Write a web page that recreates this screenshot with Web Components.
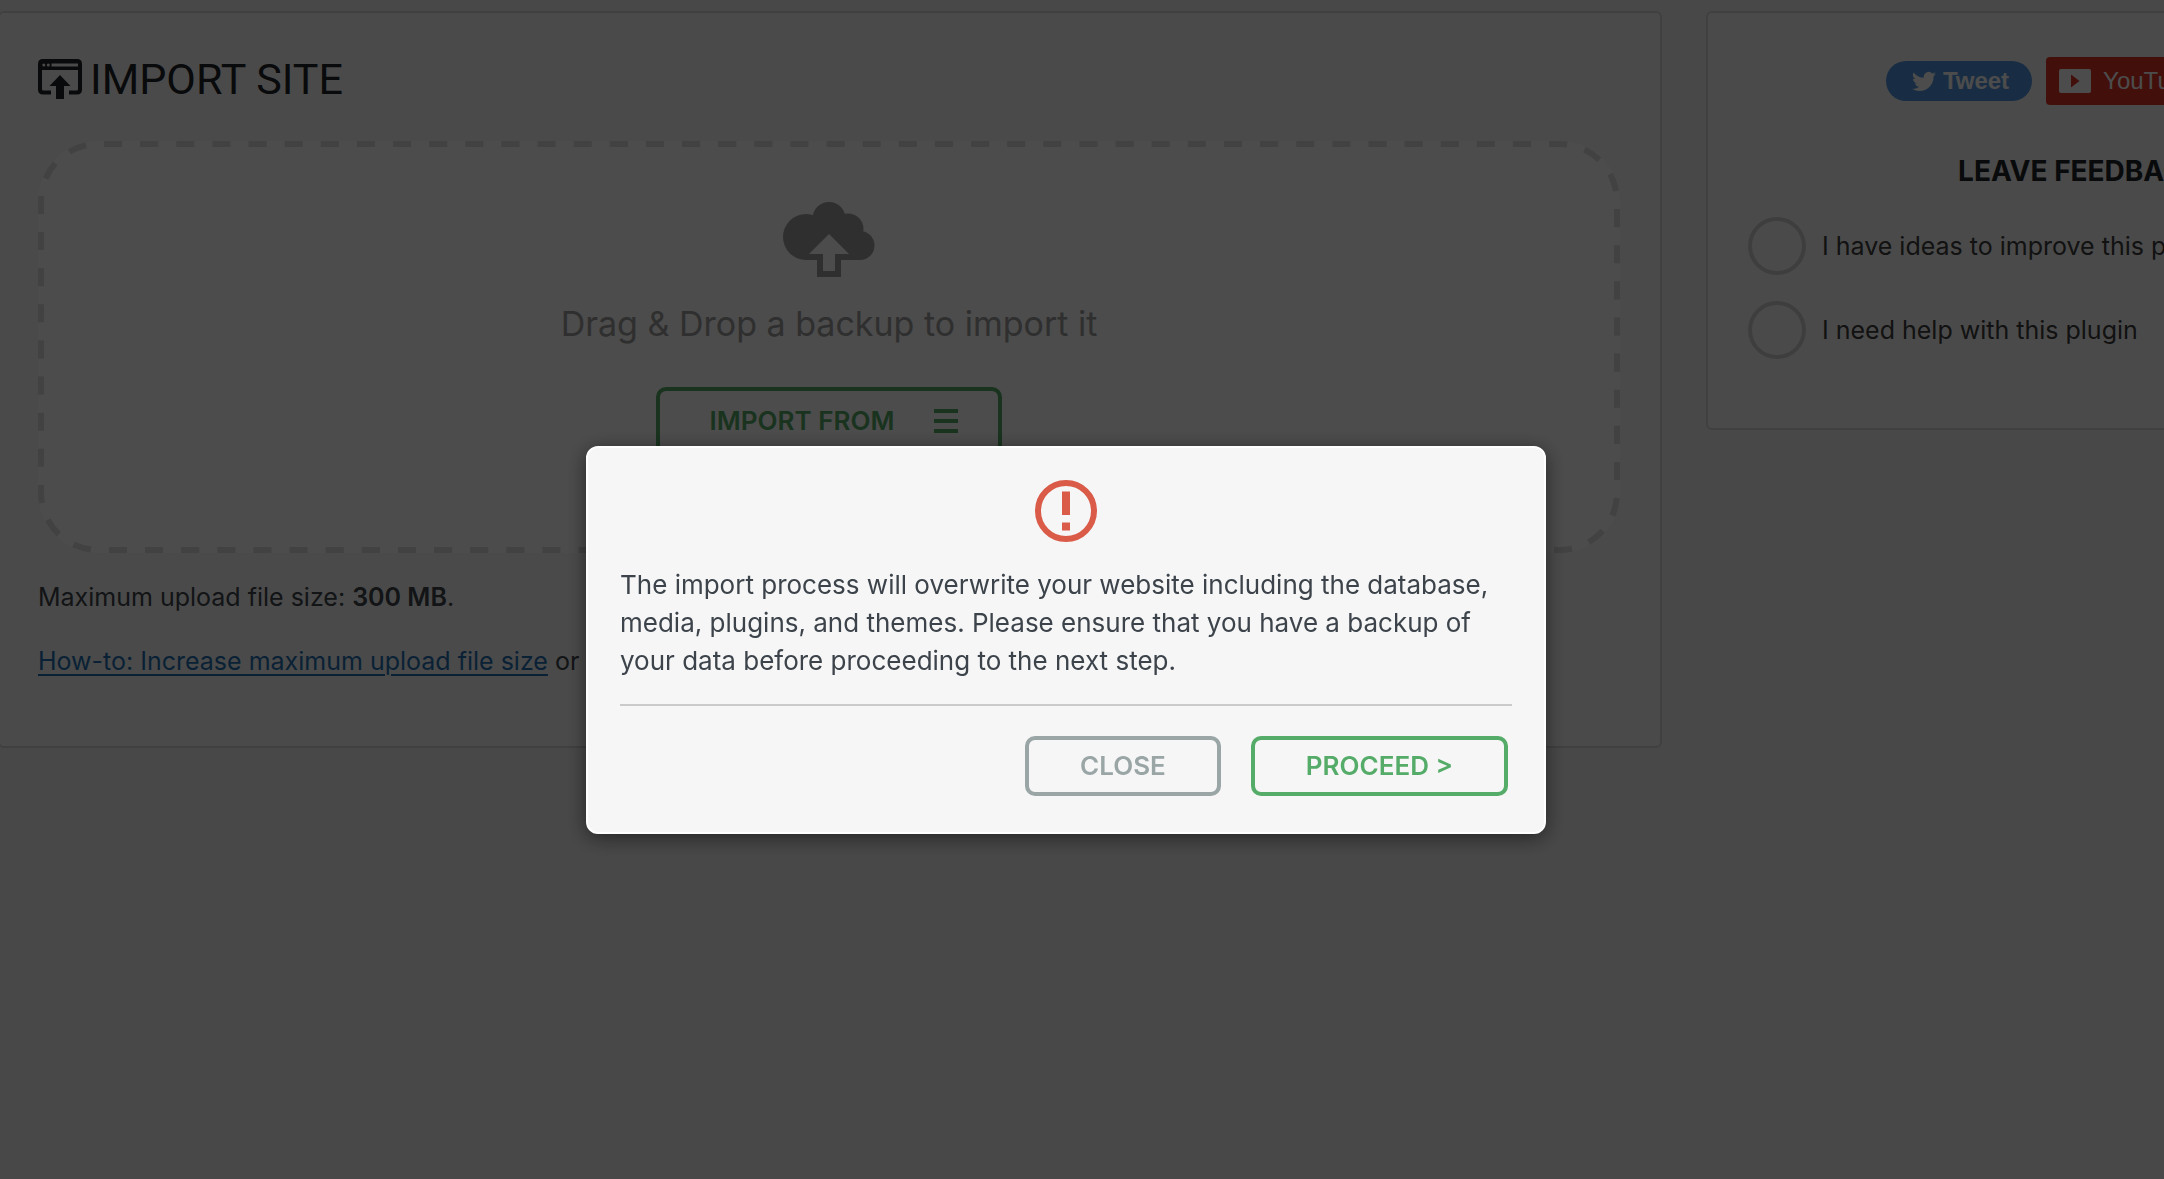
<!DOCTYPE html>
<html lang="en">
<head>
<meta charset="utf-8">
<title>Import Site</title>
<style>
  html { overflow: hidden; }
  body {
    margin: 0;
    min-height: 100vh;
    background: #f1f1f1;
    color: #3c434a;
    font: 400 25px/38px Inter, "Liberation Sans", sans-serif;
  }
</style>
</head>
<body>
<import-page></import-page>

<script>
class BaseElement extends HTMLElement {
  connectedCallback() {
    if (this.shadowRoot) return;
    this.attachShadow({ mode: 'open' }).innerHTML =
      '<style>*{box-sizing:border-box}' + this.constructor.css + '</style>' + this.constructor.html;
  }
}

class PanelCard extends BaseElement {
  static css = `
    :host { display: block; box-sizing: border-box; background: #f9f9f9; border: 2px solid #d6d6d6; border-radius: 6px; }
  `;
  static html = `<slot></slot>`;
}
customElements.define('panel-card', PanelCard);

class OutlineButton extends BaseElement {
  static css = `
    :host { display: inline-block; --tone: #55ab68; }
    :host([tone="muted"]) { --tone: #9aa5a6; }
    button {
      display: flex; align-items: center; gap: 40px;
      height: 60px; padding: 0 51px;
      border: 4px solid var(--tone); border-radius: 10px;
      background: transparent; color: var(--tone);
      font: 600 26px/38px Inter, "Liberation Sans", sans-serif;
    }
    :host([size="wide"]) button { height: 68px; padding: 0 40px 0 50px; }
  `;
  static html = `<button type="button"><slot></slot><slot name="icon"></slot></button>`;
}
customElements.define('outline-button', OutlineButton);

class SiteHeading extends BaseElement {
  static css = `
    :host { display: block; color: #1d2327; }
    h1 { display: flex; align-items: center; gap: 8px; margin: 0; font: 400 43px/60px Roboto, "Liberation Sans", sans-serif; }
    svg { display: block; flex: none; }
  `;
  static html = `
    <h1>
      <svg width="44" height="40" viewBox="0 0 44 40" aria-hidden="true">
        <path fill="currentColor" fill-rule="evenodd" d="M5 0H39Q44 0 44 5V30.500Q44 35.500 39 35.500H31V31.500H38.500Q40 31.500 40 30V11H4V30Q4 31.500 5.500 31.500H13V35.500H5Q0 35.500 0 30.500V5Q0 0 5 0ZM13.500 4.500V7.500H40V4.500Z"/>
        <circle cx="5.800" cy="6" r="1.500" fill="#f9f9f9"/>
        <circle cx="10.300" cy="6" r="1.500" fill="#f9f9f9"/>
        <path fill="currentColor" d="M22 16L32.500 27H26V40H18V27H11.500Z"/>
      </svg>
      <span>IMPORT SITE</span>
    </h1>
  `;
}
customElements.define('site-heading', SiteHeading);

class DropZone extends BaseElement {
  static css = `
    :host {
      position: relative; display: flex; flex-direction: column; align-items: center;
      box-sizing: border-box; height: 412px; padding-top: 61px;
      background: #fdfdfd; border-radius: 60px;
    }
    p { margin: 0; padding: 24px 0 40px; color: #9d9d9d; font-size: 34px; line-height: 46px; }
    svg { display: block; }
    .outline { position: absolute; inset: 0; width: 100%; height: 100%; }
    .outline rect {
      x: 3px; y: 3px; width: calc(100% - 6px); height: calc(100% - 6px); rx: 57px;
      fill: none; stroke: #dcdcdc; stroke-width: 6px; stroke-dasharray: 3 3; stroke-dashoffset: -1;
    }
    .cloud, p, outline-button { z-index: 1; }
  `;
  static html = `
    <svg class="outline" aria-hidden="true"><rect pathLength="642"/></svg>
    <svg class="cloud" width="92" height="75" viewBox="0 0 92 75" aria-hidden="true">
      <g fill="#9d9d9d">
        <circle cx="23" cy="35" r="23"/>
        <circle cx="46" cy="16.500" r="16.500"/>
        <circle cx="65" cy="27" r="15.500"/>
        <circle cx="77" cy="43.500" r="14.500"/>
        <path d="M23 20H66L80 40L77 58H23Z"/>
        <path d="M34 50H58V75H34Z"/>
      </g>
      <path fill="#fdfdfd" d="M46 32L66 52H52V69H40V52H26Z"/>
    </svg>
    <p>Drag &amp; Drop a backup to import it</p>
    <outline-button size="wide">IMPORT FROM
      <svg slot="icon" width="24" height="24" viewBox="0 0 24 24" aria-hidden="true">
        <path fill="currentColor" d="M0 0H24V4H0ZM0 10H24V14H0ZM0 20H24V24H0Z"/>
      </svg>
    </outline-button>
  `;
}
customElements.define('drop-zone', DropZone);

class UploadNotes extends BaseElement {
  static css = `
    :host { display: flex; flex-direction: column; gap: 26px; }
    p { margin: 0; }
    strong { font-weight: 600; }
    a { color: #2271b1; text-underline-offset: 4px; text-decoration-thickness: 2px; }
  `;
  static html = `
    <p>Maximum upload file size: <strong>300 MB</strong>.</p>
    <p><a href="#increase">How-to: Increase maximum upload file size</a> or</p>
  `;
}
customElements.define('upload-notes', UploadNotes);

class SocialLinks extends BaseElement {
  static css = `
    :host { display: flex; justify-content: center; align-items: center; gap: 14px; }
    a { display: flex; align-items: center; color: #fff; text-decoration: none; font: 400 24px/28px "Liberation Sans", sans-serif; }
    .tweet { gap: 7px; height: 40px; padding: 0 23px 0 26px; border-radius: 20px; background: #5297e0; font-weight: 700; }
    .tube { gap: 12px; width: 230px; height: 48px; padding: 0 13px; border-radius: 4px; background: #dc3526; }
    svg { display: block; flex: none; }
  `;
  static html = `
    <a class="tweet" href="#tweet">
      <svg width="24" height="21" viewBox="0 0 24 20" aria-hidden="true">
        <path fill="#fff" d="M23.950 2.600c-.9.400-1.800.650-2.800.800 1-.6 1.800-1.600 2.200-2.700-.95.550-2 .960-3.130 1.180A4.920 4.920 0 0 0 11.850 6.360C7.700 6.150 4.100 4.100 1.700.950A4.900 4.900 0 0 0 3.190 7.500c-.8 0-1.570-.250-2.230-.6v.060c0 2.380 1.700 4.370 3.950 4.820-.7.190-1.460.230-2.220.080.630 1.950 2.450 3.370 4.600 3.420A9.900 9.900 0 0 1 0 17.300 13.900 13.900 0 0 0 7.550 19.500c9.050 0 14-7.500 14-14v-.630c.960-.7 1.800-1.560 2.400-2.270z"/>
      </svg>
      <span>Tweet</span>
    </a>
    <a class="tube" href="#youtube">
      <svg width="32" height="24" viewBox="0 0 32 24" aria-hidden="true">
        <rect width="32" height="24" rx="2" fill="#fff"/>
        <path fill="#dc3526" d="M12 5.500L20.500 12L12 18.500Z"/>
      </svg>
      <span>YouTube</span>
    </a>
  `;
}
customElements.define('social-links', SocialLinks);

class FeedbackForm extends BaseElement {
  static css = `
    :host { display: block; }
    fieldset { display: flex; flex-direction: column; gap: 26px; margin: 0; padding: 0; border: 0; }
    legend { width: 100%; padding: 0 0 27px; text-align: center; color: #1d2327; font-size: 28px; line-height: 38px; font-weight: 700; }
    label { display: flex; align-items: center; gap: 16px; color: #3c3c3c; }
    input { appearance: none; width: 58px; height: 58px; margin: 0; border: 4px solid #d0d0d0; border-radius: 50%; }
  `;
  static html = `
    <fieldset>
      <legend>LEAVE FEEDBACK</legend>
      <label><input type="radio" name="feedback" value="ideas">I have ideas to improve this plugin</label>
      <label><input type="radio" name="feedback" value="help">I need help with this plugin</label>
    </fieldset>
  `;
}
customElements.define('feedback-form', FeedbackForm);

class WarningDialog extends BaseElement {
  static css = `
    :host {
      position: fixed; inset: 0; z-index: 2; display: flex; justify-content: center; align-items: flex-start;
      padding: 446px 32px 0 0; background: rgba(0, 0, 0, .7); box-sizing: border-box;
    }
    section {
      width: 960px; padding: 32px 32px 36px; background: #f6f6f6;
      border: 2px solid #fff; border-radius: 12px; box-shadow: 0 4px 20px rgba(0, 0, 0, .5);
    }
    svg { display: block; margin: 0 auto 24px; }
    p { margin: 0; padding-bottom: 24px; border-bottom: 2px solid #cacaca; font-size: 26px; }
    footer { display: flex; justify-content: flex-end; gap: 30px; padding: 30px 4px 0 0; }
  `;
  static html = `
    <section role="dialog" aria-modal="true" aria-describedby="message">
      <svg width="62" height="62" viewBox="0 0 62 62" aria-hidden="true">
        <circle cx="31" cy="31" r="28" fill="none" stroke="#d95b48" stroke-width="6"/>
        <path fill="#d95b48" d="M27 11.500H35V35H27ZM27 42.500H35V50.500H27Z"/>
      </svg>
      <p id="message">The import process will overwrite your website including the database, media, plugins, and themes. Please ensure that you have a backup of your data before proceeding to the next step.</p>
      <footer>
        <outline-button tone="muted">CLOSE</outline-button>
        <outline-button>PROCEED &gt;</outline-button>
      </footer>
    </section>
  `;
}
customElements.define('warning-dialog', WarningDialog);

class ImportPage extends BaseElement {
  static css = `
    :host { display: block; }
    main { display: flex; align-items: flex-start; gap: 44px; margin: 0 -292px 0 -2px; padding-top: 11px; }
    .import { flex: 1; padding: 36px 40px 66px 38px; }
    site-heading { margin-bottom: 32px; }
    upload-notes { margin-top: 25px; }
    .side { width: 750px; padding: 44px 40px 69px; }
    social-links { margin-bottom: 47px; }
  `;
  static html = `
    <main>
      <panel-card class="import">
        <site-heading></site-heading>
        <drop-zone></drop-zone>
        <upload-notes></upload-notes>
      </panel-card>
      <panel-card class="side">
        <social-links></social-links>
        <feedback-form></feedback-form>
      </panel-card>
    </main>
    <warning-dialog></warning-dialog>
  `;
}
customElements.define('import-page', ImportPage);
</script>
</body>
</html>
